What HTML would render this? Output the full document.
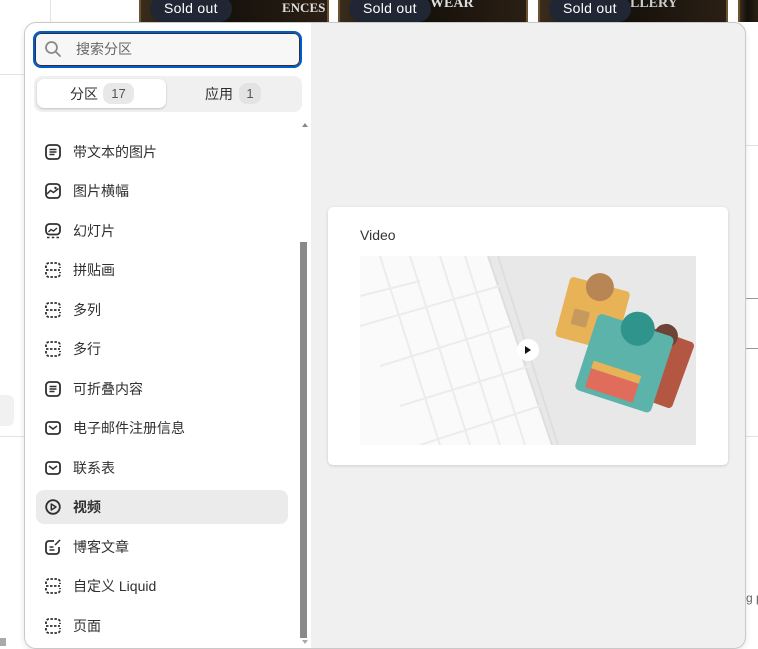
<!DOCTYPE html>
<html><head><meta charset="utf-8"><style>
*{box-sizing:border-box;margin:0;padding:0}
body{width:758px;height:649px;background:#fff;position:relative;overflow:hidden;font-family:"Liberation Sans","Noto Sans CJK SC",sans-serif;color:#303030}
.abs{position:absolute}
.img{position:absolute;top:0;height:22px;background:linear-gradient(90deg,#3a2c1c,#14100b 40%,#2a1f14);border-left:2px solid #6b5332;border-right:2px solid #6b5332}
.so{position:absolute;top:-4px;height:26px;padding:0 14px;border-radius:13px;background:#202633;color:#fff;font-size:14px;line-height:24px;letter-spacing:.3px}
.pop{position:absolute;left:24px;top:22px;width:722px;height:627px;border-radius:12px;background:#f0f0f0;border:1px solid #c9c9c9;overflow:hidden;box-shadow:0 2px 6px rgba(0,0,0,.1)}
.left{position:absolute;left:0;top:0;width:286px;height:100%;background:#fff}
.item{position:absolute;left:11px;width:252px;height:34px;font-size:14px;line-height:34px;padding-left:37px}
.item svg{position:absolute;left:9px;top:9px}
</style></head><body>
<div class="abs" style="left:50px;top:0;width:1px;height:22px;background:#e3e3e3"></div>
<div class="abs" style="left:0;top:74px;width:24px;height:1px;background:#e3e3e3"></div>
<div class="abs" style="left:0;top:395px;width:14px;height:31px;background:#f1f1f1;border-radius:0 6px 6px 0"></div>
<div class="abs" style="left:0;top:436px;width:24px;height:1px;background:#e3e3e3"></div>
<div class="abs" style="left:746px;top:145px;width:12px;height:1px;background:#e3e3e3"></div>
<div class="abs" style="left:746px;top:298px;width:12px;height:1px;background:#999"></div>
<div class="abs" style="left:746px;top:348px;width:12px;height:1px;background:#999"></div>
<div class="abs" style="left:746px;top:436px;width:12px;height:1px;background:#e3e3e3"></div>
<div class="abs" style="left:746px;top:591px;font-size:12px;color:#666;white-space:nowrap">g p</div>
<div class="abs" style="left:0;top:638px;width:6px;height:8px;background:#aaa"></div>
<div class="img" style="left:139px;width:190px"></div>
<div class="img" style="left:338px;width:190px"></div>
<div class="img" style="left:538px;width:190px"></div>
<div class="img" style="left:738px;width:22px"></div>
<div class="abs" style="left:282px;top:0;font:bold 13px 'Liberation Serif',serif;color:#ddd">ENCES</div>
<div class="abs" style="left:430px;top:-4px;font:bold 14px 'Liberation Serif',serif;color:#ddd">WEAR</div>
<div class="abs" style="left:630px;top:-4px;font:bold 14px 'Liberation Serif',serif;color:#ccc">LLERY</div>
<div class="so" style="left:150px">Sold out</div>
<div class="so" style="left:349px">Sold out</div>
<div class="so" style="left:549px">Sold out</div>
<div class="pop">
 <div class="left">
  <div class="abs" style="left:8px;top:8px;width:269px;height:37px;border:2px solid #005bd3;border-radius:8px;background:#f7f7f7;box-shadow:inset 0 0 0 1px #303030"></div>
  <svg class="abs" style="left:19px;top:17px" width="18" height="18" viewBox="0 0 18 18"><circle cx="7.5" cy="7.5" r="5.5" fill="none" stroke="#8a8a8a" stroke-width="1.8"/><path d="M11.5 11.5L16 16" stroke="#8a8a8a" stroke-width="1.8" stroke-linecap="round"/></svg>
  <div class="abs" style="left:51px;top:16px;font-size:14px;color:#666">搜索分区</div>
  <div class="abs" style="left:9px;top:53px;width:268px;height:36px;background:#f0f0f0;border-radius:8px"></div>
  <div class="abs" style="left:12px;top:56px;width:129px;height:29px;background:#fff;border-radius:7px;box-shadow:0 1px 2px rgba(0,0,0,.2)"></div>
  <div class="abs" style="left:45px;top:61px;font-size:14px">分区</div>
  <div class="abs" style="left:78px;top:60px;width:31px;height:21px;border-radius:8px;background:#e8e8e8;font-size:13px;text-align:center;line-height:21px;color:#555">17</div>
  <div class="abs" style="left:180px;top:61px;font-size:14px">应用</div>
  <div class="abs" style="left:214px;top:60px;width:22px;height:21px;border-radius:8px;background:#e3e3e3;font-size:13px;text-align:center;line-height:21px;color:#555">1</div>
  <div class="abs" style="left:277px;top:100px;width:0;height:0;border-left:3px solid transparent;border-right:3px solid transparent;border-bottom:4px solid #888"></div>
  <div class="abs" style="left:275px;top:219px;width:7px;height:396px;background:#8a8a8a"></div>
  <div class="abs" style="left:277px;top:617px;width:0;height:0;border-left:3px solid transparent;border-right:3px solid transparent;border-top:4px solid #aaa"></div>

  <div class="item" style="top:112px"><svg width="16" height="16"><rect x="1" y="1" width="14" height="14" rx="3.5" fill="none" stroke="#303030" stroke-width="1.8"/><path d="M4.5 5.5h7M4.5 8h7M4.5 10.5h5" stroke="#303030" stroke-width="1.4"/></svg>带文本的图片</div>
  <div class="item" style="top:151px"><svg width="16" height="16"><rect x="1" y="1" width="14" height="14" rx="3.5" fill="none" stroke="#303030" stroke-width="1.8"/><path d="M2 11l3.5-3.5 3 2 5-4" fill="none" stroke="#303030" stroke-width="1.5"/><circle cx="10.5" cy="5" r="1.2" fill="#303030"/></svg>图片横幅</div>
  <div class="item" style="top:191px"><svg width="16" height="16"><rect x="1" y="1" width="14" height="10.5" rx="3.5" fill="none" stroke="#303030" stroke-width="1.8"/><path d="M3.5 9l2.5-2.5 2.5 1.5 3.5-3" fill="none" stroke="#303030" stroke-width="1.4"/><path d="M2 14.5h2.5M6.8 14.5h2.5M11.5 14.5h2.5" stroke="#303030" stroke-width="1.5"/></svg>幻灯片</div>
  <div class="item" style="top:230px"><svg width="16" height="16"><path d="M1 6V4a3 3 0 0 1 3-3h8a3 3 0 0 1 3 3v2M1 10v2a3 3 0 0 0 3 3h8a3 3 0 0 0 3-3v-2M1 8h14" fill="none" stroke="#303030" stroke-width="1.8" stroke-dasharray="2.5 1.5"/></svg>拼贴画</div>
  <div class="item" style="top:270px"><svg width="16" height="16"><path d="M1 6V4a3 3 0 0 1 3-3h8a3 3 0 0 1 3 3v2M1 10v2a3 3 0 0 0 3 3h8a3 3 0 0 0 3-3v-2M1 8h14" fill="none" stroke="#303030" stroke-width="1.8" stroke-dasharray="2.5 1.5"/></svg>多列</div>
  <div class="item" style="top:309px"><svg width="16" height="16"><path d="M1 6V4a3 3 0 0 1 3-3h8a3 3 0 0 1 3 3v2M1 10v2a3 3 0 0 0 3 3h8a3 3 0 0 0 3-3v-2M1 8h14" fill="none" stroke="#303030" stroke-width="1.8" stroke-dasharray="2.5 1.5"/></svg>多行</div>
  <div class="item" style="top:349px"><svg width="16" height="16"><rect x="1" y="1" width="14" height="14" rx="3.5" fill="none" stroke="#303030" stroke-width="1.8"/><path d="M4.5 5.5h7M4.5 8h7M4.5 10.5h5" stroke="#303030" stroke-width="1.4"/></svg>可折叠内容</div>
  <div class="item" style="top:388px"><svg width="16" height="16"><rect x="1" y="2" width="14" height="12" rx="3" fill="none" stroke="#303030" stroke-width="1.8"/><path d="M4 6l4 3 4-3" fill="none" stroke="#303030" stroke-width="1.5"/></svg>电子邮件注册信息</div>
  <div class="item" style="top:428px"><svg width="16" height="16"><rect x="1" y="2" width="14" height="12" rx="3" fill="none" stroke="#303030" stroke-width="1.8"/><path d="M4 6l4 3 4-3" fill="none" stroke="#303030" stroke-width="1.5"/></svg>联系表</div>
  <div class="item" style="top:467px;background:#ebebeb;border-radius:8px;font-weight:bold"><svg width="16" height="16"><circle cx="8" cy="8" r="6.8" fill="none" stroke="#303030" stroke-width="1.8"/><path d="M6.3 5v6l4.7-3z" fill="none" stroke="#303030" stroke-width="1.5" stroke-linejoin="round"/></svg>视频</div>
  <div class="item" style="top:507px"><svg width="16" height="16"><path d="M9 2H4a3 3 0 0 0-3 3v7a3 3 0 0 0 3 3h7a3 3 0 0 0 3-3V8" fill="none" stroke="#303030" stroke-width="1.8"/><path d="M4.5 8h4M4.5 11h5M10 6l5-5" stroke="#303030" stroke-width="1.5"/></svg>博客文章</div>
  <div class="item" style="top:546px"><svg width="16" height="16"><path d="M1 6V4a3 3 0 0 1 3-3h8a3 3 0 0 1 3 3v2M1 10v2a3 3 0 0 0 3 3h8a3 3 0 0 0 3-3v-2M1 8h14" fill="none" stroke="#303030" stroke-width="1.8" stroke-dasharray="2.5 1.5"/></svg>自定义 Liquid</div>
  <div class="item" style="top:586px"><svg width="16" height="16"><path d="M1 6V4a3 3 0 0 1 3-3h8a3 3 0 0 1 3 3v2M1 10v2a3 3 0 0 0 3 3h8a3 3 0 0 0 3-3v-2M1 8h14" fill="none" stroke="#303030" stroke-width="1.8" stroke-dasharray="2.5 1.5"/></svg>页面</div>
 </div>
 <div class="abs" style="left:303px;top:184px;width:400px;height:258px;background:#fff;border-radius:5px;box-shadow:0 1px 3px rgba(0,0,0,.15)">
  <div class="abs" style="left:32px;top:20px;font-size:14px;color:#333">Video</div>
  <svg class="abs" style="left:32px;top:49px" width="336" height="189" viewBox="0 0 336 189">
   <rect width="336" height="189" fill="#e8e8e8"/>
   <path d="M0 0H128L192 189H0Z" fill="#fafafa"/>
   <path d="M128 0L192 189M138 0L198 189" stroke="#dedede" stroke-width="2"/>
   <g stroke="#ececec" stroke-width="2" fill="none"><path d="M20 0L80 189M50 0L110 189M80 0L140 189M105 0L165 189M0 40L60 25M0 70L140 30M20 110L150 70M40 150L170 110M60 189L180 150"/></g>
   <g transform="rotate(15 220 90)"><rect x="193" y="25" width="62" height="62" rx="4" fill="#e8b257"/><circle cx="224" cy="28" r="14" fill="#b88654"/><rect x="205" y="55" width="16" height="16" rx="2" fill="#c69a5f"/></g>
   <g transform="rotate(20 295 110)"><rect x="265" y="75" width="60" height="70" rx="4" fill="#b35743"/><circle cx="295" cy="78" r="12" fill="#6e4236"/></g>
   <g transform="rotate(18 255 120)"><rect x="220" y="65" width="80" height="80" rx="5" fill="#5bb3a9"/><circle cx="262" cy="68" r="17" fill="#2f948b"/><path d="M230 120h50v20h-50z" fill="#e06c5c"/><path d="M230 112h50v8h-50z" fill="#e8b257"/></g>
   <circle cx="168" cy="94" r="11" fill="#fff"/><path d="M165 90v8l6-4z" fill="#111"/>
  </svg>
 </div>
</div>
</body></html>
